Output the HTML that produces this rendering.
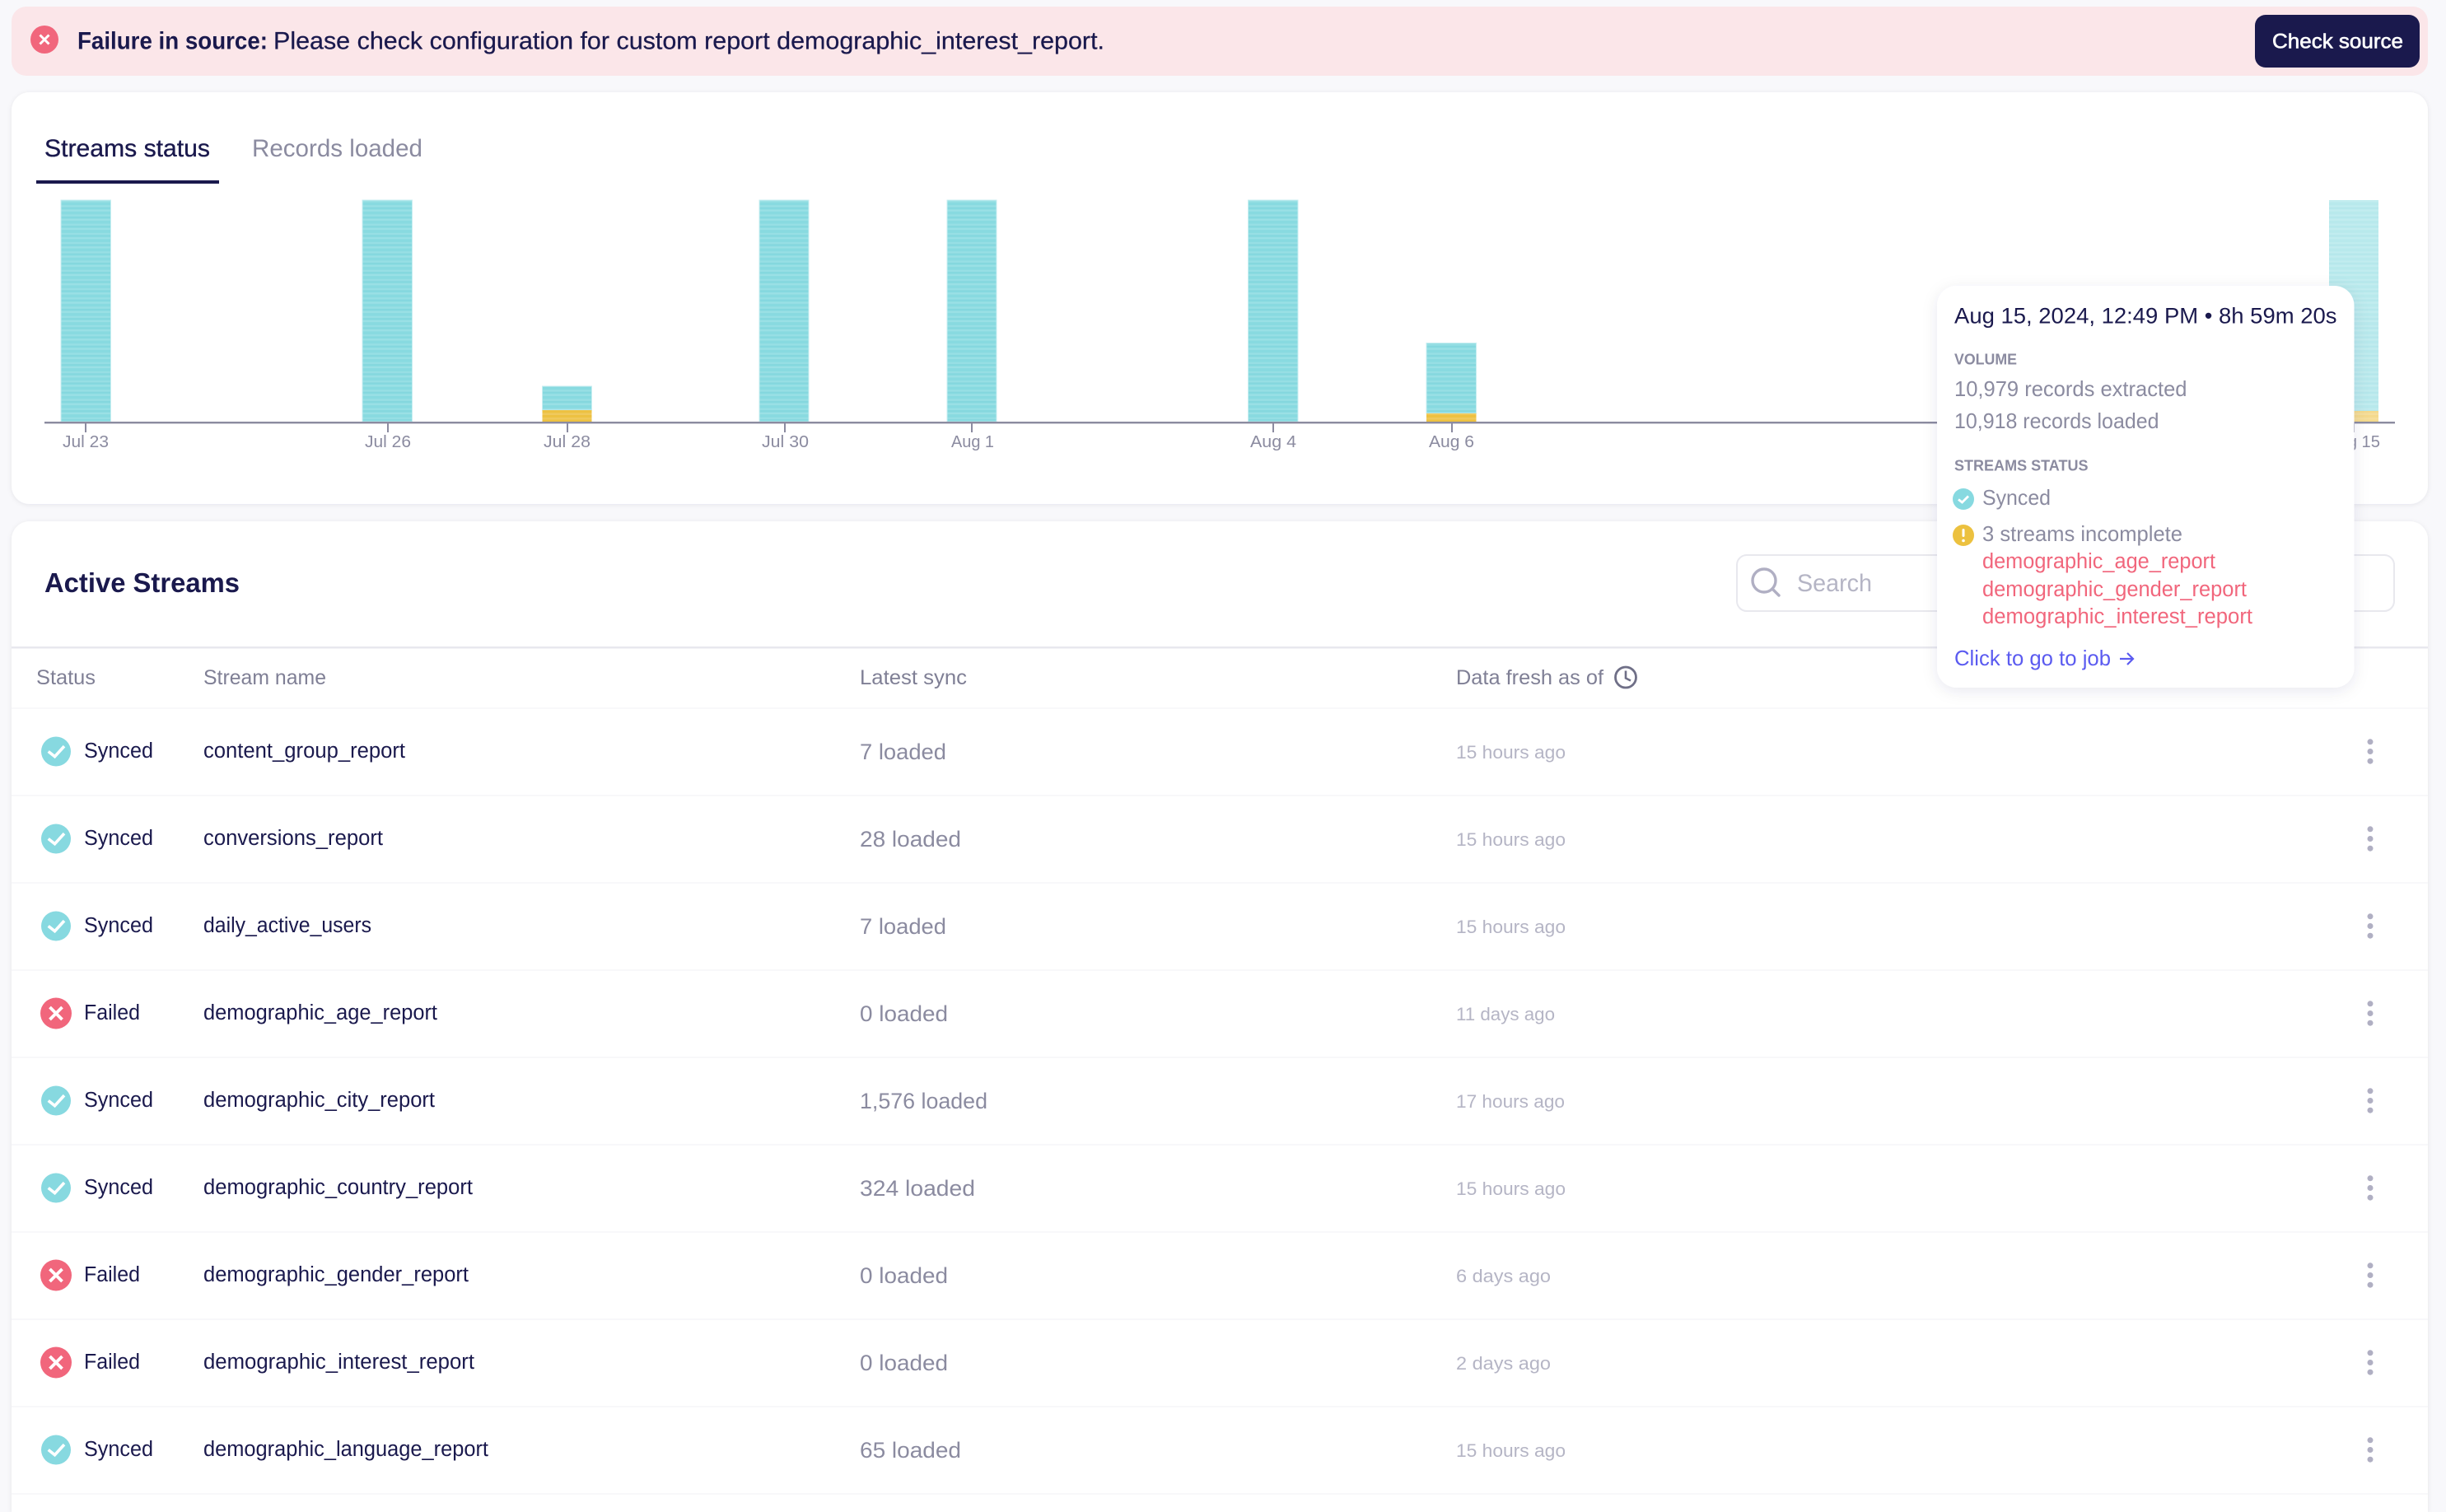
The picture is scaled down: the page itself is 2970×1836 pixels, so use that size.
<!DOCTYPE html>
<html><head><meta charset="utf-8"><title>Streams status</title>
<style>
html,body{margin:0;padding:0;background:#f8f8fb}
svg{display:block}
text{font-family:"Liberation Sans",Arial,sans-serif;white-space:pre}
.n{font-size:25.5px;fill:#1a194d}
.h{font-size:25px;fill:#7f7f95}
.l{font-size:27px;fill:#8b8ba0}
.f{font-size:22.5px;fill:#b5b5c5}
.t{font-size:20.5px;fill:#8b8ba0}
.tt{font-size:26px;fill:#8b8ba0}
.r{font-size:25.5px;fill:#f1667c}
.cap{font-size:18px;font-weight:bold;fill:#8b8ba0}
</style></head><body>
<svg xmlns="http://www.w3.org/2000/svg" width="2970" height="1836" viewBox="0 0 2970 1836">
<defs>
<pattern id="st" width="10" height="11.2" patternUnits="userSpaceOnUse"><rect width="10" height="11.2" fill="#88dae0"/><rect y="2.8" width="10" height="2.4" fill="#97dfe4"/><rect y="8" width="10" height="2.4" fill="#9ae0e5"/><rect y="5.4" width="10" height="1.6" fill="#84d7de"/></pattern>
<pattern id="sy" width="10" height="5.6" patternUnits="userSpaceOnUse"><rect width="10" height="5.6" fill="#edc141"/><rect y="3" width="10" height="2.6" fill="#f0c95c"/></pattern>
<filter id="sh" x="-10%" y="-10%" width="120%" height="120%"><feDropShadow dx="0" dy="4" stdDeviation="9" flood-color="#1a194d" flood-opacity="0.09"/></filter>
<filter id="cs" x="-2%" y="-5%" width="104%" height="110%"><feDropShadow dx="0" dy="1" stdDeviation="3" flood-color="#1a194d" flood-opacity="0.08"/></filter>
<g id="ok"><circle r="18" fill="#87d9e0"/><path d="M-9.3 0L-1.5 6.2L10 -6.4" fill="none" stroke="#fff" stroke-width="3.6"/></g>
<g id="no"><circle r="19" fill="#f1667c"/><path d="M-7.5 -7.5L7.5 7.5M7.5 -7.5L-7.5 7.5" fill="none" stroke="#fff" stroke-width="3.8"/></g>
<g id="kb" fill="#b0afc3"><circle cy="-11.7" r="3.5"/><circle r="3.5"/><circle cy="11.7" r="3.5"/></g>
</defs>

<rect width="2970" height="1836" fill="#f8f8fb"/>

<!-- banner -->
<rect x="14" y="8" width="2934" height="84" rx="18" fill="#fbe6e9"/>
<circle cx="54" cy="48" r="17" fill="#f1667c"/>
<path d="M48.5 42.5L59.5 53.5M59.5 42.5L48.5 53.5" stroke="#fff" stroke-width="3" fill="none"/>
<text x="94" y="59.5" font-size="30" font-weight="bold" fill="#1a194d" textLength="231" lengthAdjust="spacingAndGlyphs">Failure in source:</text>
<text x="332" y="59.5" font-size="30" fill="#1a194d" stroke="#1a194d" stroke-width="0.25" textLength="1009" lengthAdjust="spacingAndGlyphs">Please check configuration for custom report demographic_interest_report.</text>
<rect x="2738" y="18" width="200" height="64" rx="13" fill="#1a194d"/>
<text x="2759" y="58.5" font-size="25" fill="#fff" stroke="#fff" stroke-width="0.6" textLength="159" lengthAdjust="spacingAndGlyphs">Check source</text>

<!-- chart card -->
<rect x="14" y="112" width="2934" height="500" rx="22" fill="#fff" filter="url(#cs)"/>
<text x="54" y="190" font-size="30" fill="#1a194d" stroke="#1a194d" stroke-width="0.35" textLength="201" lengthAdjust="spacingAndGlyphs">Streams status</text>
<text x="306" y="190" font-size="30" fill="#8b8ba0" textLength="207" lengthAdjust="spacingAndGlyphs">Records loaded</text>
<rect x="44" y="219" width="222" height="4" fill="#1a194d"/>

<g stroke="#c8eef1" stroke-width="1">
<rect x="74" y="243" width="60.5" height="269" fill="url(#st)"/>
<rect x="440" y="243" width="60.5" height="269" fill="url(#st)"/>
<rect x="658.5" y="469" width="60" height="29" fill="url(#st)"/>
<rect x="922" y="243" width="60" height="269" fill="url(#st)"/>
<rect x="1150" y="243" width="60" height="269" fill="url(#st)"/>
<rect x="1515.5" y="243" width="60.5" height="269" fill="url(#st)"/>
<rect x="1732" y="416.5" width="60.5" height="85.5" fill="url(#st)"/>
</g>
<rect x="658.5" y="498" width="60" height="14" fill="url(#sy)"/>
<rect x="1732" y="502" width="60.5" height="10" fill="url(#sy)"/>
<g opacity="0.6">
<rect x="2828" y="243" width="60" height="256" fill="url(#st)"/>
<rect x="2828" y="499" width="60" height="13" fill="url(#sy)"/>
</g>

<rect x="54" y="512" width="2854" height="2.4" fill="#8b8ba0"/>
<g fill="#8b8ba0">
<rect x="103" y="514" width="2" height="11"/><rect x="470" y="514" width="2" height="11"/><rect x="688" y="514" width="2" height="11"/><rect x="952" y="514" width="2" height="11"/><rect x="1179" y="514" width="2" height="11"/><rect x="1545" y="514" width="2" height="11"/><rect x="1762" y="514" width="2" height="11"/><rect x="2857" y="514" width="2" height="11"/>
</g>
<text class="t" x="76" y="543" textLength="56" lengthAdjust="spacingAndGlyphs">Jul 23</text>
<text class="t" x="443" y="543" textLength="56" lengthAdjust="spacingAndGlyphs">Jul 26</text>
<text class="t" x="660" y="543" textLength="57" lengthAdjust="spacingAndGlyphs">Jul 28</text>
<text class="t" x="925" y="543" textLength="57" lengthAdjust="spacingAndGlyphs">Jul 30</text>
<text class="t" x="1155" y="543" textLength="52" lengthAdjust="spacingAndGlyphs">Aug 1</text>
<text class="t" x="1518" y="543" textLength="56" lengthAdjust="spacingAndGlyphs">Aug 4</text>
<text class="t" x="1735" y="543" textLength="55" lengthAdjust="spacingAndGlyphs">Aug 6</text>
<text class="t" x="2826" y="543" textLength="64" lengthAdjust="spacingAndGlyphs">Aug 15</text>

<!-- streams card -->
<path d="M14 1836V655a22 22 0 0 1 22-22H2926a22 22 0 0 1 22 22V1836Z" fill="#fff" filter="url(#cs)"/>
<text x="54" y="719" font-size="33" font-weight="bold" fill="#1a194d" textLength="237" lengthAdjust="spacingAndGlyphs">Active Streams</text>
<rect x="2109" y="674" width="798" height="68" rx="12" fill="#fff" stroke="#e8e8ee" stroke-width="2"/>
<circle cx="2142" cy="705" r="14" fill="none" stroke="#b0afc3" stroke-width="3.4"/>
<path d="M2152 715L2160 723" stroke="#b0afc3" stroke-width="3.4" stroke-linecap="round"/>
<text x="2182" y="718" font-size="30" fill="#b5b5c5" textLength="91" lengthAdjust="spacingAndGlyphs">Search</text>
<rect x="14" y="785" width="2934" height="2.5" fill="#e8e8ee"/>

<text class="h" x="44" y="831" textLength="72" lengthAdjust="spacingAndGlyphs">Status</text>
<text class="h" x="247" y="831" textLength="149" lengthAdjust="spacingAndGlyphs">Stream name</text>
<text class="h" x="1044" y="831" textLength="130" lengthAdjust="spacingAndGlyphs">Latest sync</text>
<text class="h" x="1768" y="831" textLength="179" lengthAdjust="spacingAndGlyphs">Data fresh as of</text>
<circle cx="1974" cy="822.5" r="12.5" fill="none" stroke="#6f6f87" stroke-width="2.8"/>
<path d="M1974 814.5V823.5L1980 826.5" fill="none" stroke="#6f6f87" stroke-width="2.6"/>

<g fill="#f8f8fa">
<rect x="14" y="859" width="2934" height="2"/><rect x="14" y="965" width="2934" height="2"/><rect x="14" y="1071" width="2934" height="2"/><rect x="14" y="1177" width="2934" height="2"/><rect x="14" y="1283" width="2934" height="2"/><rect x="14" y="1389" width="2934" height="2"/><rect x="14" y="1495" width="2934" height="2"/><rect x="14" y="1601" width="2934" height="2"/><rect x="14" y="1707" width="2934" height="2"/><rect x="14" y="1813" width="2934" height="2"/>
</g>

<!-- row 1 -->
<use href="#ok" x="68" y="912.5"/><text class="n" x="102" y="920" textLength="84" lengthAdjust="spacingAndGlyphs">Synced</text><text class="n" x="247" y="920" textLength="245" lengthAdjust="spacingAndGlyphs">content_group_report</text><text class="l" x="1044" y="922" textLength="105" lengthAdjust="spacingAndGlyphs">7 loaded</text><text class="f" x="1768" y="921" textLength="133" lengthAdjust="spacingAndGlyphs">15 hours ago</text><use href="#kb" x="2878" y="912.5"/>
<!-- row 2 -->
<use href="#ok" x="68" y="1018.5"/><text class="n" x="102" y="1026" textLength="84" lengthAdjust="spacingAndGlyphs">Synced</text><text class="n" x="247" y="1026" textLength="218" lengthAdjust="spacingAndGlyphs">conversions_report</text><text class="l" x="1044" y="1028" textLength="123" lengthAdjust="spacingAndGlyphs">28 loaded</text><text class="f" x="1768" y="1027" textLength="133" lengthAdjust="spacingAndGlyphs">15 hours ago</text><use href="#kb" x="2878" y="1018.5"/>
<!-- row 3 -->
<use href="#ok" x="68" y="1124.5"/><text class="n" x="102" y="1132" textLength="84" lengthAdjust="spacingAndGlyphs">Synced</text><text class="n" x="247" y="1132" textLength="204" lengthAdjust="spacingAndGlyphs">daily_active_users</text><text class="l" x="1044" y="1134" textLength="105" lengthAdjust="spacingAndGlyphs">7 loaded</text><text class="f" x="1768" y="1133" textLength="133" lengthAdjust="spacingAndGlyphs">15 hours ago</text><use href="#kb" x="2878" y="1124.5"/>
<!-- row 4 -->
<use href="#no" x="68" y="1230.5"/><text class="n" x="102" y="1238" textLength="68" lengthAdjust="spacingAndGlyphs">Failed</text><text class="n" x="247" y="1238" textLength="284" lengthAdjust="spacingAndGlyphs">demographic_age_report</text><text class="l" x="1044" y="1240" textLength="107" lengthAdjust="spacingAndGlyphs">0 loaded</text><text class="f" x="1768" y="1239" textLength="120" lengthAdjust="spacingAndGlyphs">11 days ago</text><use href="#kb" x="2878" y="1230.5"/>
<!-- row 5 -->
<use href="#ok" x="68" y="1336.5"/><text class="n" x="102" y="1344" textLength="84" lengthAdjust="spacingAndGlyphs">Synced</text><text class="n" x="247" y="1344" textLength="281" lengthAdjust="spacingAndGlyphs">demographic_city_report</text><text class="l" x="1044" y="1346" textLength="155" lengthAdjust="spacingAndGlyphs">1,576 loaded</text><text class="f" x="1768" y="1345" textLength="132" lengthAdjust="spacingAndGlyphs">17 hours ago</text><use href="#kb" x="2878" y="1336.5"/>
<!-- row 6 -->
<use href="#ok" x="68" y="1442.5"/><text class="n" x="102" y="1450" textLength="84" lengthAdjust="spacingAndGlyphs">Synced</text><text class="n" x="247" y="1450" textLength="327" lengthAdjust="spacingAndGlyphs">demographic_country_report</text><text class="l" x="1044" y="1452" textLength="140" lengthAdjust="spacingAndGlyphs">324 loaded</text><text class="f" x="1768" y="1451" textLength="133" lengthAdjust="spacingAndGlyphs">15 hours ago</text><use href="#kb" x="2878" y="1442.5"/>
<!-- row 7 -->
<use href="#no" x="68" y="1548.5"/><text class="n" x="102" y="1556" textLength="68" lengthAdjust="spacingAndGlyphs">Failed</text><text class="n" x="247" y="1556" textLength="322" lengthAdjust="spacingAndGlyphs">demographic_gender_report</text><text class="l" x="1044" y="1558" textLength="107" lengthAdjust="spacingAndGlyphs">0 loaded</text><text class="f" x="1768" y="1557" textLength="115" lengthAdjust="spacingAndGlyphs">6 days ago</text><use href="#kb" x="2878" y="1548.5"/>
<!-- row 8 -->
<use href="#no" x="68" y="1654.5"/><text class="n" x="102" y="1662" textLength="68" lengthAdjust="spacingAndGlyphs">Failed</text><text class="n" x="247" y="1662" textLength="329" lengthAdjust="spacingAndGlyphs">demographic_interest_report</text><text class="l" x="1044" y="1664" textLength="107" lengthAdjust="spacingAndGlyphs">0 loaded</text><text class="f" x="1768" y="1663" textLength="115" lengthAdjust="spacingAndGlyphs">2 days ago</text><use href="#kb" x="2878" y="1654.5"/>
<!-- row 9 -->
<use href="#ok" x="68" y="1760.5"/><text class="n" x="102" y="1768" textLength="84" lengthAdjust="spacingAndGlyphs">Synced</text><text class="n" x="247" y="1768" textLength="346" lengthAdjust="spacingAndGlyphs">demographic_language_report</text><text class="l" x="1044" y="1770" textLength="123" lengthAdjust="spacingAndGlyphs">65 loaded</text><text class="f" x="1768" y="1769" textLength="133" lengthAdjust="spacingAndGlyphs">15 hours ago</text><use href="#kb" x="2878" y="1760.5"/>

<!-- tooltip -->
<rect x="2352" y="347" width="506.5" height="488" rx="24" fill="#fff" filter="url(#sh)"/>
<text x="2373" y="392.5" font-size="27" fill="#1a194d" textLength="464.5" lengthAdjust="spacingAndGlyphs">Aug 15, 2024, 12:49 PM • 8h 59m 20s</text>
<text class="cap" x="2373" y="442.5" textLength="76" lengthAdjust="spacingAndGlyphs">VOLUME</text>
<text class="tt" x="2373" y="481" textLength="282.5" lengthAdjust="spacingAndGlyphs">10,979 records extracted</text>
<text class="tt" x="2373" y="520" textLength="248.5" lengthAdjust="spacingAndGlyphs">10,918 records loaded</text>
<text class="cap" x="2373" y="571.5" textLength="162.5" lengthAdjust="spacingAndGlyphs">STREAMS STATUS</text>
<circle cx="2384" cy="606" r="13" fill="#87d9e0"/>
<path d="M2378 606.5L2382.5 610L2390 602.5" fill="none" stroke="#fff" stroke-width="2.8"/>
<text class="tt" x="2407" y="613" textLength="83" lengthAdjust="spacingAndGlyphs">Synced</text>
<circle cx="2384" cy="650" r="13" fill="#ecc13f"/>
<rect x="2382.5" y="642" width="3" height="10" rx="1.5" fill="#fff"/><circle cx="2384" cy="656.5" r="1.8" fill="#fff"/>
<text class="tt" x="2407" y="657" textLength="243" lengthAdjust="spacingAndGlyphs">3 streams incomplete</text>
<text class="r" x="2407" y="690" textLength="283" lengthAdjust="spacingAndGlyphs">demographic_age_report</text>
<text class="r" x="2407" y="724" textLength="321" lengthAdjust="spacingAndGlyphs">demographic_gender_report</text>
<text class="r" x="2407" y="757" textLength="328" lengthAdjust="spacingAndGlyphs">demographic_interest_report</text>
<text x="2373" y="808" font-size="26" fill="#5b5bf0" textLength="190" lengthAdjust="spacingAndGlyphs">Click to go to job</text>
<path d="M2574 800H2590M2583 793L2590 800L2583 807" fill="none" stroke="#5b5bf0" stroke-width="2.2"/>
</svg>
</body></html>
